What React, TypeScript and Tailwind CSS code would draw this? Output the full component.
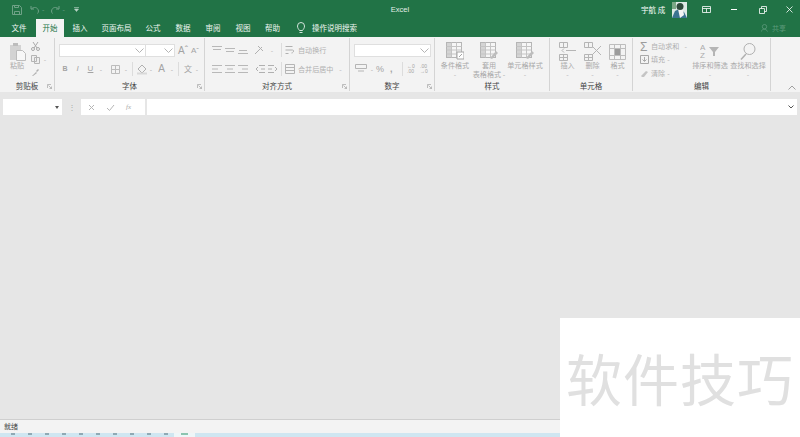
import { ReactNode } from "react";

const FONT = `"Noto Sans CJK SC", "Noto Sans", sans-serif`;
const ARIAL = '"Liberation Sans", sans-serif';
const tabs = [
  { name: "文件", w: "w-[34px]" },
  { name: "开始", w: "w-[28px]" },
  { name: "插入", w: "w-[32px]" },
  { name: "页面布局", w: "w-[41px]" },
  { name: "公式", w: "w-[32px]" },
  { name: "数据", w: "w-[28px]" },
  { name: "审阅", w: "w-[32px]" },
  { name: "视图", w: "w-[28px]" },
  { name: "帮助", w: "w-[31px]" },
];

function Ico({ w, h, children, className = "" }: { w: number; h: number; children: ReactNode; className?: string }) {
  return (
    <svg width={w} height={h} viewBox={`0 0 ${w} ${h}`} fill="none" className={`shrink-0 ${className}`}>
      {children}
    </svg>
  );
}

function Caret({ className = "" }: { className?: string }) {
  return <span className={`w-[8px] shrink-0 text-center text-[7px] leading-none text-[#b5b5b5] ${className}`}>-</span>;
}

function Sep({ className = "" }: { className?: string }) {
  return <div className={`w-px h-[14px] bg-[#dcdcdc] shrink-0 ${className}`} />;
}

function Chevron() {
  return (
    <Ico w={9} h={5}>
      <path d="M.5.5 4.5 4.5 8.5.5" stroke="#b4b4b4" />
    </Ico>
  );
}

function Launcher() {
  return (
    <Ico w={5} h={5} className="absolute right-[2px] bottom-[2px]">
      <path d="M.5 4V.5H4M1.5 1.5 4.5 4.5M4.5 2.5v2h-2" stroke="#a5a5a5" strokeWidth=".7" />
    </Ico>
  );
}

function Group({ w, label, launcher, children }: { w: number; label: string; launcher?: boolean; children: ReactNode }) {
  return (
    <div className="relative flex flex-col shrink-0 h-full border-r border-[#d4d4d4]" style={{ width: w }}>
      <div className="h-[42px] flex shrink-0">{children}</div>
      <div className="flex-1 text-center text-[7.5px] leading-[9px] text-[#444] pt-[1px]">{label}</div>
      {launcher && <Launcher />}
    </div>
  );
}

function Lines({ rows }: { rows: number[][] }) {
  return (
    <Ico w={10} h={10}>
      {rows.map(([y, x1, x2], i) => (
        <path key={i} d={`M${x1} ${y}H${x2}`} stroke="#b8b8b8" />
      ))}
    </Ico>
  );
}

function Big({ lines, icon, caretInline, width }: { lines: string[]; icon: ReactNode; caretInline?: boolean; width: number }) {
  return (
    <div className="flex flex-col items-center shrink-0" style={{ width }}>
      <div className="h-[19px] flex items-center justify-center">{icon}</div>
      <div className="text-[7.1px] leading-[9px] text-[#a9a9a9] text-center whitespace-nowrap">
        {lines.map((l, i) => (
          <div key={i}>
            {l}
            {caretInline && i === lines.length - 1 ? " -" : ""}
          </div>
        ))}
      </div>
      {!caretInline && <div className="text-[7px] leading-[8px] text-[#b5b5b5]">-</div>}
    </div>
  );
}

function Sheet({ children }: { children?: ReactNode }) {
  return (
    <Ico w={18} h={19}>
      <rect x=".5" y=".5" width="15" height="15" fill="#f6f6f6" stroke="#b5b5b5" />
      <path d="M1 1h4.500v14H1z" fill="#d4d4d4" />
      <path d="M.5 4.500h15M.5 8h15M.5 12h15M5.500.5v15M10.500.5v15" stroke="#c4c4c4" />
      {children}
    </Ico>
  );
}

function Cells({ children }: { children?: ReactNode }) {
  return (
    <Ico w={19} h={19}>
      <path d="M1.500.5h8v5h-8zM5.500.5v5M1.500 12.500h8v6h-8zM5.500 12.500v6M1.500 15.500h8" stroke="#b5b5b5" />
      {children}
    </Ico>
  );
}

function App() {
  return (
    <div className="relative w-[800px] h-[437px] overflow-hidden flex flex-col bg-[#e6e6e6]" style={{ fontFamily: FONT }}>
      {/* title bar */}
      <div className="h-[19px] bg-[#217346] flex items-center text-white shrink-0">
        <div className="w-[320px] flex items-center pl-[12px]">
          <Ico w={10} h={10}>
            <path d="M.5.5h7l2 2v7h-9zM2.500 9.500v-3h5v3M2.500.5v2h4v-2" stroke="#6fa287" />
          </Ico>
          <Ico w={10} h={9} className="ml-[8px]">
            <path d="M1 1v3h3M1.500 4C3.500 1.500 8 2 8.500 6c0 1-.5 2-1 2.500" stroke="#6fa287" />
          </Ico>
          <span className="text-[7px] leading-none text-[#6fa287] ml-[2px]">-</span>
          <Ico w={10} h={9} className="ml-[6px]">
            <path d="M9 1v3H6M8.500 4C6.500 1.500 2 2 1.500 6c0 1 .5 2 1 2.500" stroke="#6fa287" />
          </Ico>
          <span className="text-[7px] leading-none text-[#6fa287] ml-[2px]">-</span>
          <Ico w={5} h={5} className="ml-[9px]">
            <path d="M0 .5h5M.5 2h4L2.500 4.500z" fill="#b9d3c6" stroke="#b9d3c6" strokeWidth=".6" />
          </Ico>
        </div>
        <div className="flex-1 text-center text-[7.5px] text-[#e4efe9]" style={{ fontFamily: ARIAL }}>
          Excel
        </div>
        <div className="w-[320px] flex justify-end">
          <div className="flex items-center w-[159px] shrink-0">
            <span className="text-[7.5px] text-white whitespace-nowrap w-[31px]">宇航 成</span>
            <Ico w={15} h={16}>
              <rect width="15" height="16" fill="#dfeae6" />
              <path d="M0 16 3 9l4-2 5 3 3 6z" fill="#3b7391" />
              <path d="M6 7h5l1 6-4 3z" fill="#f4f4f4" />
              <circle cx="8" cy="4.500" r="3.500" fill="#2f4a3c" />
              <path d="M0 0h4v7H0z" fill="#7ba886" />
            </Ico>
            <Ico w={9} h={7} className="ml-[15px]">
              <path d="M.5.5h8v6h-8zM.5 2.500h8M4.500 2.500v4" stroke="#fff" strokeWidth=".8" />
            </Ico>
            <div className="w-[6px] h-px bg-white ml-[20px]" />
            <Ico w={8} h={8} className="ml-[22px]">
              <path d="M.5 2.500h5v5h-5zM2.500 2.500v-2h5v5h-2" stroke="#fff" strokeWidth=".8" />
            </Ico>
            <Ico w={7} h={7} className="ml-[19px]">
              <path d="m.5.5 6 6M6.500.5l-6 6" stroke="#fff" strokeWidth=".8" />
            </Ico>
          </div>
        </div>
      </div>

      {/* tabs */}
      <div className="h-[18px] bg-[#217346] flex items-end pl-[2px] shrink-0">
        {tabs.map((t) => (
          <div
            key={t.name}
            className={`h-[18px] ${t.w} flex items-center justify-center text-[7.5px] whitespace-nowrap ${
              t.name === "开始" ? "bg-[#f3f3f3] text-[#217346]" : "text-[#eef5f1]"
            }`}
          >
            {t.name}
          </div>
        ))}
        <div className="h-[18px] flex items-center ml-[9px]">
          <Ico w={8} h={12}>
            <path d="M2.500 8.500C1.500 7 .5 6 .5 4a3.500 3.500 0 0 1 7 0c0 2-1 3-2 4.500zM2.500 10.500h3" stroke="#e8f1ec" strokeWidth=".9" />
          </Ico>
          <span className="text-[7.5px] text-[#eef5f1] ml-[7px] whitespace-nowrap">操作说明搜索</span>
        </div>
        <div className="ml-auto h-[18px] flex items-center mr-[14px]">
          <Ico w={8} h={8}>
            <circle cx="3.500" cy="2.700" r="2.200" stroke="#5d9a7b" strokeWidth=".8" />
            <path d="M.5 7.500c0-3 5-3 6 0" stroke="#5d9a7b" strokeWidth=".8" />
          </Ico>
          <span className="text-[7px] text-[#5d9a7b] ml-[3px]">共享</span>
        </div>
      </div>

      {/* ribbon */}
      <div className="relative h-[55px] bg-[#f3f3f3] flex shrink-0 py-[1px]">
        <Group w={55} label="剪贴板" launcher>
          <div className="w-[31px] pl-[9px] pt-[4px] flex flex-col items-start">
            <Ico w={18} h={19}>
              <path d="M1 3h11v15H1z" fill="#d3d3d3" />
              <path d="M4 1h5v3H4z" fill="#bdbdbd" />
              <path d="M7.500 8.500h6l3 3v7h-9z" fill="#f7f7f7" stroke="#bcbcbc" />
            </Ico>
            <span className="text-[7.1px] leading-[9px] text-[#a9a9a9] whitespace-nowrap ml-[1px]">粘贴</span>
            <span className="text-[7px] leading-[8px] text-[#b5b5b5] ml-[6px]">-</span>
          </div>
          <div className="flex flex-col gap-[4px] pt-[4px]">
            <Ico w={9} h={9}>
              <path d="M2 0 6 6M7 0 3 6" stroke="#a9a9a9" />
              <circle cx="2" cy="7" r="1.500" stroke="#a9a9a9" />
              <circle cx="7" cy="7" r="1.500" stroke="#a9a9a9" />
            </Ico>
            <div className="flex items-center h-[9px]">
              <Ico w={10} h={9}>
                <path d="M.5.5h5v6h-5zM3.500 2.500h5v6h-5z" fill="#efefef" stroke="#b5b5b5" />
              </Ico>
              <Caret />
            </div>
            <Ico w={9} h={9}>
              <path d="M1 8 5 4l1 1-4 3zM5 3l2-2 1 1-2 2z" fill="#b0b0b0" />
            </Ico>
          </div>
        </Group>

        <Group w={150} label="字体" launcher>
          <div className="flex flex-col pl-[4px] pt-[6px]">
            <div className="flex items-center">
              <div className="w-[87px] h-[13px] bg-white border border-[#dfdfdf] flex items-center justify-end pr-[1px]">
                <Chevron />
              </div>
              <div className="w-[29px] h-[13px] bg-white border border-l-0 border-[#dfdfdf] flex items-center justify-end pr-[1px]">
                <Chevron />
              </div>
              <span className="text-[10px] leading-none text-[#a3a3a3] ml-[3px]" style={{ fontFamily: ARIAL }}>
                Aˆ
              </span>
              <span className="text-[8px] leading-none text-[#a3a3a3] ml-[3px]" style={{ fontFamily: ARIAL }}>
                Aˇ
              </span>
            </div>
            <div className="flex items-center mt-[5px] h-[14px] text-[#a3a3a3] text-[8px]" style={{ fontFamily: ARIAL }}>
              <span className="font-bold w-[12px] text-[7px] text-center">B</span>
              <span className="italic w-[13px] text-center">I</span>
              <span className="underline w-[13px] text-center">U</span>
              <Caret />
              <Ico w={9} h={9} className="ml-[6px]">
                <path d="M.5.5h8v8h-8zM4.500.5v8M.5 4.500h8" stroke="#bcbcbc" />
              </Ico>
              <Caret className="ml-[2px]" />
              <Sep className="ml-[2px]" />
              <Ico w={10} h={11} className="ml-[4px]">
                <path d="m1 5 4-4 4 4-4 4z" stroke="#b0b0b0" />
                <path d="M0 9.500h10" stroke="#d9d9d9" strokeWidth="2" />
              </Ico>
              <Caret />
              <span className="text-[10px] w-[13px] text-center leading-none">A</span>
              <Caret />
              <Sep className="ml-[2px]" />
              <span className="text-[8px] w-[8px] ml-[5px]" style={{ fontFamily: FONT }}>文</span>
              <Caret className="ml-[1px]" />
            </div>
          </div>
        </Group>

        <Group w={145} label="对齐方式" launcher>
          <div className="flex flex-col pl-[7px] pt-[6px]">
            <div className="flex items-center h-[12px] gap-[3px]">
              <Lines rows={[[1.5, 0, 10], [4.5, 1, 9]]} />
              <Lines rows={[[3.5, 0, 10], [6.5, 1, 9]]} />
              <Lines rows={[[5.5, 1, 9], [8.5, 0, 10]]} />
              <Ico w={11} h={10} className="ml-[3px]">
                <path d="M1 9 8 2M4 1l5 5" stroke="#b0b0b0" />
              </Ico>
              <Caret />
              <Sep className="ml-[2px]" />
              <Ico w={9} h={10}>
                <path d="M.5 1.500h7M.5 5h7c2 0 1 3-1 3M.5 8.500h3" stroke="#b0b0b0" />
              </Ico>
              <span className="text-[7.1px] text-[#b0b0b0] whitespace-nowrap ml-[1px]">自动换行</span>
            </div>
            <div className="flex items-center h-[14px] gap-[3px] mt-[6px]">
              <Lines rows={[[1.5, 0, 10], [5, 0, 6], [8.5, 0, 10]]} />
              <Lines rows={[[1.5, 0, 10], [5, 2, 8], [8.5, 0, 10]]} />
              <Lines rows={[[1.5, 0, 10], [5, 4, 10], [8.5, 0, 10]]} />
              <Ico w={10} h={10} className="ml-[4px]">
                <path d="M4 1.500h6M4 8.500h6M6 5h4M3 3 1 5l2 2" stroke="#b0b0b0" />
              </Ico>
              <Ico w={10} h={10}>
                <path d="M0 1.500h6M0 8.500h6M0 5h4M7 3l2 2-2 2" stroke="#b0b0b0" />
              </Ico>
              <Sep />
              <Ico w={10} h={10}>
                <path d="M.5.5h9v9h-9zM.5 3.500h9M.5 6.500h9" stroke="#b5b5b5" />
              </Ico>
              <span className="text-[7.1px] text-[#b0b0b0] whitespace-nowrap">合并后居中</span>
              <Caret />
            </div>
          </div>
        </Group>

        <Group w={85} label="数字" launcher>
          <div className="flex flex-col pl-[4px] pt-[6px]">
            <div className="w-[77px] h-[13px] bg-white border border-[#dfdfdf] flex items-center justify-end pr-[1px]">
              <Chevron />
            </div>
            <div className="flex items-center h-[14px] mt-[5px] text-[#a3a3a3] pl-[1px]" style={{ fontFamily: ARIAL }}>
              <Ico w={13} h={10}>
                <path d="M.5.5h11v4H.5zM3 7h6" stroke="#b5b5b5" />
              </Ico>
              <Caret />
              <span className="text-[9px] w-[11px] leading-none">%</span>
              <span className="text-[9px] font-bold ml-[3px] w-[5px] leading-none">,</span>
              <Sep className="ml-[7px]" />
              <span className="text-[5px] leading-[5px] w-[10px] ml-[4px]">←0<br />.00</span>
              <span className="text-[5px] leading-[5px] w-[10px] ml-[3px]">.00<br />→0</span>
            </div>
          </div>
        </Group>

        <Group w={115} label="样式">
          <div className="flex pl-[4px] pt-[4px]">
            <Big width={32} lines={["条件格式"]} icon={<Sheet><path d="M11 10h7v7h-7z" fill="#fff" stroke="#a5a5a5" /><path d="m13 15 3-3" stroke="#a5a5a5" /></Sheet>} />
            <Big width={36} lines={["套用", "表格格式"]} caretInline icon={<Sheet><path d="m10 16 6-7 2 2-6 6z" fill="#bdbdbd" /></Sheet>} />
            <Big width={36} lines={["单元格样式"]} icon={<Sheet><path d="m10 16 6-7 2 2-6 6z" fill="#bdbdbd" /></Sheet>} />
          </div>
        </Group>

        <Group w={83} label="单元格">
          <div className="flex pl-[5px] pt-[4px]">
            <Big width={25} lines={["插入"]} icon={<Cells><path d="M8 8.500h10M4 8.500l2-2M4 8.500l2 2" stroke="#b5b5b5" /></Cells>} />
            <Big width={25} lines={["删除"]} icon={<Cells><path d="m9 4 9 9M18 4l-9 9" stroke="#b5b5b5" /></Cells>} />
            <Big width={25} lines={["格式"]} icon={
              <Ico w={17} h={19}>
                <path d="M.5 2.500h16v15H.5zM.5 6.500h16M.5 13.500h16M5.500 2.500v15M11.500 2.500v15" stroke="#bdbdbd" />
                <rect x="6" y="7" width="5" height="6" fill="#9b9b9b" />
              </Ico>
            } />
          </div>
        </Group>

        <Group w={138} label="编辑">
          <div className="flex flex-col pl-[7px] pt-[2px] w-[58px] shrink-0">
            <div className="flex items-center h-[13px] whitespace-nowrap text-[7.1px] text-[#b0b0b0]">
              <span className="text-[12px] leading-none w-[11px] text-[#9c9c9c]" style={{ fontFamily: ARIAL }}>Σ</span>
              <span>自动求和</span>
              <span className="ml-[5px]">-</span>
            </div>
            <div className="flex items-center h-[13px] whitespace-nowrap text-[7.1px] text-[#b0b0b0]">
              <Ico w={9} h={9} className="mr-[2px]">
                <path d="M.5.5h8v8h-8zM4.500 2v4M2.500 4.500l2 2 2-2" stroke="#a9a9a9" />
              </Ico>
              <span>填充</span>
              <span className="ml-[2px]">-</span>
            </div>
            <div className="flex items-center h-[14px] whitespace-nowrap text-[7.1px] text-[#b0b0b0]">
              <Ico w={9} h={9} className="mr-[2px]">
                <path d="m1 7 5-5 2 1-4 5H2z" fill="#c4c4c4" />
              </Ico>
              <span>清除</span>
              <span className="ml-[2px]">-</span>
            </div>
          </div>
          <div className="flex pt-[4px]">
            <Big width={38} lines={["排序和筛选"]} icon={
              <Ico w={20} h={19}>
                <text x="0" y="8" fontSize="8" fill="#ababab" fontFamily="Liberation Sans">A</text>
                <text x="0" y="16" fontSize="8" fill="#ababab" fontFamily="Liberation Sans">Z</text>
                <path d="M9 5h10l-4 5v4h-2v-4z" fill="#b5b5b5" />
              </Ico>
            } />
            <Big width={38} lines={["查找和选择"]} icon={
              <Ico w={16} h={19}>
                <circle cx="9.500" cy="7" r="5.500" stroke="#b0b0b0" />
                <path d="M6 12 1 17.500" stroke="#b0b0b0" strokeWidth="1.500" />
              </Ico>
            } />
          </div>
        </Group>

        <Ico w={8} h={5} className="absolute right-[4px] bottom-[2px]">
          <path d="M.5 4.500 4 1l3.500 3.500" stroke="#a0a0a0" />
        </Ico>
      </div>

      {/* formula bar */}
      <div className="h-[16px] mt-[7px] flex items-stretch pl-[3px] pr-[3px] shrink-0">
        <div className="w-[59px] bg-white flex items-center justify-end pr-[3px]">
          <div className="w-0 h-0 border-x-[2.5px] border-x-transparent border-t-[3px] border-t-[#555]" />
        </div>
        <div className="w-[19px] flex items-center justify-center text-[#a9a9a9] text-[8px] leading-none">⋮</div>
        <div className="w-[64px] bg-white flex items-center pl-[7px] gap-[11px] mr-[2px]">
          <Ico w={7} h={7}>
            <path d="m1 1 5 5M6 1 1 6" stroke="#b5b5b5" />
          </Ico>
          <Ico w={9} h={7}>
            <path d="m1 4 2.500 2.500L8 1" stroke="#b5b5b5" />
          </Ico>
          <span className="text-[7px] italic text-[#a9a9a9]" style={{ fontFamily: '"Liberation Serif", serif' }}>fx</span>
        </div>
        <div className="flex-1 bg-white flex items-center justify-end pr-[3px]">
          <Ico w={6} h={4}>
            <path d="m.5.5 2.500 2.500L5.500.5" stroke="#555" />
          </Ico>
        </div>
      </div>

      <div className="flex-1" />

      {/* status bar */}
      <div className="h-[14px] bg-[#f3f3f3] border-t border-[#cfcfcf] flex items-center pl-[4px] text-[7px] text-[#444] shrink-0">就绪</div>

      {/* taskbar sliver */}
      <div className="h-[4px] bg-[#cfe6f1] flex items-start shrink-0 overflow-hidden">
        <div className="flex gap-[13px] pl-[11px] w-[174px]">
          {[0, 1, 2, 3, 4, 5, 6, 7, 8, 9].map((i) => (
            <div key={i} className="w-[4px] h-[2px] bg-[#8fa9b4]" />
          ))}
        </div>
        <div className="w-[21px] h-[4px] bg-[#eef6f8] flex justify-center">
          <div className="w-[7px] h-[2px] bg-[#8cc4b0]" />
        </div>
      </div>

      {/* watermark */}
      <div className="absolute right-0 bottom-0 w-[240px] h-[119px] bg-white flex items-start pl-[6px] pt-[24px]">
        <span className="text-[56px] leading-[70px] font-normal text-[#e0e0e0] whitespace-nowrap tracking-[1px]">软件技巧</span>
      </div>
    </div>
  );
}

export default App;
